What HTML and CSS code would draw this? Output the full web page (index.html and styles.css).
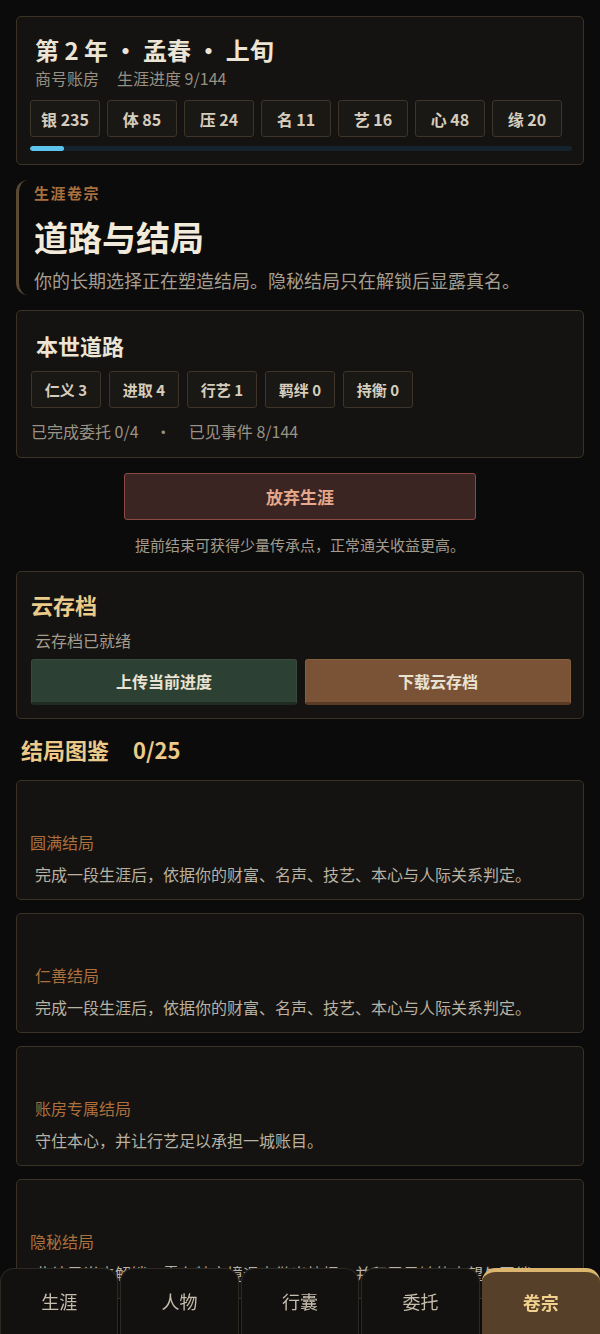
FILE: index.html
```html
<!DOCTYPE html>
<html lang="zh-CN">
<head>
  <meta charset="UTF-8" />
  <meta name="viewport" content="width=device-width, initial-scale=1.0" />
  <title>卷宗</title>
  <link rel="stylesheet" href="styles.css">
</head>
<body>
  <div class="page">

    <!-- 顶部状态 -->
    <div class="card status">
      <h1 class="status-title">第 2 年 · 孟春 · 上旬</h1>
      <div class="status-sub"><span>商号账房</span><span>生涯进度 9/144</span></div>
      <div class="chips">
        <span class="chip">银 235</span>
        <span class="chip">体 85</span>
        <span class="chip">压 24</span>
        <span class="chip">名 11</span>
        <span class="chip">艺 16</span>
        <span class="chip">心 48</span>
        <span class="chip">缘 20</span>
      </div>
      <div class="progress"><div class="progress-fill" style="width: 6.25%"></div></div>
    </div>

    <!-- 卷宗标题 -->
    <div class="hero">
      <div class="hero-label">生涯卷宗</div>
      <h2 class="hero-title">道路与结局</h2>
      <p class="hero-desc">你的长期选择正在塑造结局。隐秘结局只在解锁后显露真名。</p>
    </div>

    <!-- 本世道路 -->
    <div class="card road">
      <h3 class="card-title">本世道路</h3>
      <div class="chips road-chips">
        <span class="chip">仁义 3</span>
        <span class="chip">进取 4</span>
        <span class="chip">行艺 1</span>
        <span class="chip">羁绊 0</span>
        <span class="chip">持衡 0</span>
      </div>
      <div class="road-meta">
        <span>已完成委托 0/4</span>
        <span class="dot">·</span>
        <span>已见事件 8/144</span>
      </div>
    </div>

    <button class="btn-quit">放弃生涯</button>
    <p class="quit-note">提前结束可获得少量传承点，正常通关收益更高。</p>

    <!-- 云存档 -->
    <div class="card cloud">
      <h3 class="card-title gold">云存档</h3>
      <div class="cloud-status">云存档已就绪</div>
      <div class="cloud-actions">
        <button class="btn btn-upload">上传当前进度</button>
        <button class="btn btn-download">下载云存档</button>
      </div>
    </div>

    <h3 class="endings-head">结局图鉴 <span class="count">0/25</span></h3>

    <div class="ending card">
      <div class="ending-name shift">圆满结局</div>
      <div class="ending-desc">完成一段生涯后，依据你的财富、名声、技艺、本心与人际关系判定。</div>
    </div>
    <div class="ending card">
      <div class="ending-name">仁善结局</div>
      <div class="ending-desc">完成一段生涯后，依据你的财富、名声、技艺、本心与人际关系判定。</div>
    </div>
    <div class="ending card">
      <div class="ending-name">账房专属结局</div>
      <div class="ending-desc">守住本心，并让行艺足以承担一城账目。</div>
    </div>
    <div class="ending card">
      <div class="ending-name shift">隐秘结局</div>
      <div class="ending-desc">此结局尚未解锁，需在特定境遇中做出抉择，并积累足够的声望与羁绊。</div>
    </div>
  </div>

  <!-- 底部导航 -->
  <nav class="tabbar">
    <a class="tab">生涯</a>
    <a class="tab">人物</a>
    <a class="tab">行囊</a>
    <a class="tab">委托</a>
    <a class="tab active">卷宗</a>
  </nav>
</body>
</html>
```

FILE: styles.css
```css
body {
  margin: 0;
  padding: 0;
  background: #0c0b0b;
  color: #e8e0d0;
  font-family: 'Noto Sans CJK SC', 'Noto Sans', sans-serif;
}

.page {
  padding: 16px 16px 90px;
}

h1, h2, h3, p {
  margin: 0;
}

.card {
  background: #141311;
  border: 1px solid #3a3325;
  border-radius: 5px;
}

/* 顶部状态 */
.status {
  padding: 18px 11px 13px 13px;
}

.status-title {
  font-size: 24px;
  line-height: 30px;
  font-weight: 700;
  color: #ece4d4;
  padding-left: 5px;
}

.status-sub {
  display: flex;
  gap: 18px;
  margin-top: 3px;
  font-size: 16px;
  line-height: 20px;
  color: #979083;
  padding-left: 5px;
}

.chips {
  display: flex;
  gap: 7px;
  margin-top: 12px;
}

.chip {
  box-sizing: border-box;
  width: 70px;
  height: 37px;
  display: flex;
  align-items: center;
  justify-content: center;
  background: #1a1815;
  border: 1px solid #3d3529;
  border-radius: 3px;
  font-size: 16px;
  font-weight: 700;
  color: #d6cdbc;
}

.progress {
  margin-top: 9px;
  height: 5px;
  background: #14232c;
  border-radius: 3px;
  overflow: hidden;
}

.progress-fill {
  height: 100%;
  background: #5cc4ec;
  border-radius: 3px;
}

/* 卷宗标题 */
.hero {
  margin-top: 15px;
  border-left: 3px solid #5a4a34;
  border-radius: 12px 0 0 12px;
  padding: 3px 0 2px 15px;
}

.hero-label {
  font-size: 15px;
  line-height: 20px;
  font-weight: 700;
  letter-spacing: 1.5px;
  color: #a8703f;
}

.hero-title {
  margin-top: 12px;
  font-size: 34px;
  line-height: 44px;
  font-weight: 700;
  color: #f2eadb;
}

.hero-desc {
  margin-top: 8px;
  font-size: 18px;
  line-height: 26px;
  color: #a69e8f;
}

/* 本世道路 */
.road {
  margin-top: 15px;
  padding: 19px 14px 16px 14px;
}

.card-title {
  font-size: 22px;
  line-height: 30px;
  font-weight: 700;
  color: #ece4d4;
  padding-left: 5px;
}

.card-title.gold {
  color: #eccb8a;
  padding-left: 0;
}

.road-chips {
  gap: 8px;
  margin-top: 11px;
}

.road-chips .chip {
  font-size: 15px;
}

.road-meta {
  margin-top: 13px;
  font-size: 16px;
  line-height: 20px;
  color: #9a9284;
}

.road-meta .dot {
  margin: 0 14px 0 13px;
}

/* 放弃 */
.btn-quit {
  display: block;
  width: 352px;
  height: 47px;
  margin: 15px auto 0;
  background: #3a2522;
  border: 1px solid #8c4a42;
  border-radius: 3px;
  font-family: inherit;
  font-size: 17px;
  font-weight: 700;
  color: #e6a98c;
}

.quit-note {
  margin-top: 15px;
  text-align: center;
  font-size: 15px;
  line-height: 20px;
  color: #a39b8d;
}

/* 云存档 */
.cloud {
  margin-top: 16px;
  padding: 17px 12px 13px 14px;
}

.cloud-status {
  margin-top: 11px;
  padding-left: 4px;
  font-size: 16px;
  line-height: 20px;
  color: #a39b8d;
}

.cloud-actions {
  display: grid;
  grid-template-columns: 1fr 1fr;
  gap: 8px;
  margin-top: 9px;
}

.btn {
  height: 46px;
  border: 1px solid transparent;
  border-bottom-width: 3px;
  border-radius: 3px;
  font-family: inherit;
  font-size: 16px;
  font-weight: 700;
  color: #ebe3d2;
}

.btn-upload {
  background: #2d4034;
  border-color: #3a4a3c;
  border-bottom-color: #1f2c23;
}

.btn-download {
  background: #7a5336;
  border-color: #84603f;
  border-bottom-color: #5a3c26;
}

/* 结局图鉴 */
.endings-head {
  margin-top: 15px;
  padding-left: 5px;
  font-size: 22px;
  line-height: 30px;
  font-weight: 700;
  color: #eccb8a;
}

.endings-head .count {
  margin-left: 19px;
}

.ending {
  margin-top: 13px;
  padding: 51px 14px 14px 18px;
}

.endings-head + .ending {
  margin-top: 16px;
}

.ending-name {
  font-size: 16px;
  line-height: 20px;
  color: #ad703d;
}

.ending-name.shift {
  margin-left: -5px;
}

.ending-desc {
  margin-top: 11px;
  font-size: 16px;
  line-height: 22px;
  color: #b9b1a1;
}

/* 底部导航 */
.tabbar {
  position: fixed;
  left: 0;
  right: 0;
  bottom: 0;
  display: grid;
  grid-template-columns: repeat(5, 1fr);
  gap: 2px;
  height: 66px;
}

.tab {
  display: flex;
  align-items: center;
  justify-content: center;
  padding-bottom: 2px;
  background: #131110;
  border: 1px solid #2c2822;
  border-bottom: none;
  border-radius: 14px 14px 0 0;
  font-size: 18px;
  color: #c6bdad;
  cursor: pointer;
}

.tab.active {
  background: #574029;
  border: none;
  border-top: 4px solid #dcb66e;
  font-weight: 700;
  color: #f2d18e;
}
```
